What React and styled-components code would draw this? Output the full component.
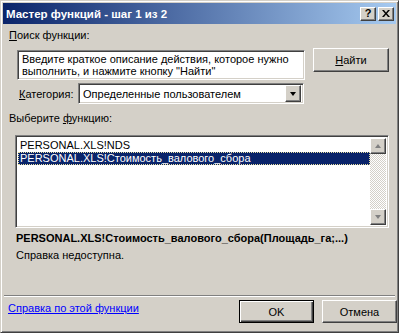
import React from "react";
import styled, { createGlobalStyle, css } from "styled-components";

const GlobalStyle = createGlobalStyle`
  html, body {
    margin: 0;
    padding: 0;
    background: #d4d0c8;
  }
  body {
    font-family: "Liberation Sans", Arial, sans-serif;
    font-size: 11px;
    color: #000;
  }
`;

const raised = css`
  border: 1px solid;
  border-color: #fff #404040 #404040 #fff;
  box-shadow: inset -1px -1px #808080, inset 1px 1px #d4d0c8;
  background: #d4d0c8;
`;

const sunken = css`
  border: 1px solid;
  border-color: #808080 #fff #fff #808080;
  box-shadow: inset 1px 1px #404040, inset -1px -1px #d4d0c8;
  background: #fff;
`;

const Window = styled.div`
  box-sizing: border-box;
  width: 399px;
  height: 333px;
  display: flex;
  flex-direction: column;
  padding: 1px;
  border: 1px solid;
  border-color: #d4d0c8 #404040 #404040 #d4d0c8;
  box-shadow: inset 1px 1px #fff, inset -1px -1px #808080;
  background: #d4d0c8;
  overflow: hidden;
`;

const TitleBar = styled.div`
  height: 21px;
  margin: 1px 1px 0;
  display: flex;
  align-items: center;
  padding: 0 2px 0 3px;
  background: linear-gradient(to right, #0a246a, #a6caf0);
`;

const Title = styled.span`
  flex: 1;
  color: #fff;
  font-weight: bold;
  font-size: 11.5px;
  white-space: nowrap;
`;

const CaptionButton = styled.div`
  ${raised};
  box-sizing: border-box;
  width: 16px;
  height: 14px;
  margin-left: ${p => p.$gap}px;
  display: flex;
  align-items: center;
  justify-content: center;
  font-weight: bold;
  font-size: 11px;
  line-height: 1;
`;

const Body = styled.div`
  display: flex;
  flex-direction: column;
  flex: 1;
`;

const Label = styled.div`
  height: 13px;
  line-height: 13px;
  margin: ${p => p.$top}px 0 0 ${p => p.$left}px;
  white-space: nowrap;
  font-weight: ${p => (p.$bold ? "bold" : "normal")};
`;

const Row = styled.div`
  display: flex;
  align-items: ${p => p.$align || "flex-start"};
  margin-top: ${p => p.$top}px;
`;

const SearchBox = styled.div`
  ${sunken};
  box-sizing: border-box;
  width: 288px;
  height: 30px;
  margin: 2px 0 0 15px;
  padding: 2px 4px;
  line-height: 12px;
`;

const Button = styled.div`
  ${raised};
  box-sizing: border-box;
  width: ${p => p.$w}px;
  height: ${p => p.$h}px;
  margin-left: ${p => p.$left}px;
  display: flex;
  align-items: center;
  justify-content: center;
  ${p =>
    p.$default &&
    css`
      border: 1px solid #000;
      box-shadow: inset 1px 1px #fff, inset -1px -1px #404040,
        inset -2px -2px #808080;
    `}
`;

const CatLabel = styled.div`
  width: 59px;
  margin-left: 17px;
`;

const Select = styled.div`
  ${sunken};
  box-sizing: border-box;
  width: 226px;
  height: 21px;
  display: flex;
  align-items: center;
  padding: 2px;
`;

const SelectText = styled.span`
  flex: 1;
  padding-left: 2px;
`;

const ArrowButton = styled.div`
  ${raised};
  box-sizing: border-box;
  width: ${p => p.$w || 16}px;
  height: ${p => p.$h || 17}px;
  display: flex;
  align-items: center;
  justify-content: center;
`;

const Arrow = styled.span`
  width: 0;
  height: 0;
  border-left: 3.5px solid transparent;
  border-right: 3.5px solid transparent;
  ${p =>
    p.$up
      ? css`border-bottom: 4px solid ${p.$color};`
      : css`border-top: 4px solid ${p.$color};`}
`;

const ListBox = styled.div`
  ${sunken};
  box-sizing: border-box;
  width: 374px;
  height: 93px;
  margin: 10px 0 0 13px;
  display: flex;
  padding: 2px;
`;

const Items = styled.div`
  flex: 1;
  padding-top: 1px;
`;

const Item = styled.div`
  height: 13px;
  line-height: 13px;
  padding-left: 2px;
  white-space: nowrap;
  overflow: hidden;
  ${p =>
    p.$selected &&
    css`
      background: #0a246a;
      color: #fff;
      outline: 1px dotted #e8e0a0;
      outline-offset: -1px;
    `}
`;

const ScrollBar = styled.div`
  width: 16px;
  display: flex;
  flex-direction: column;
  justify-content: space-between;
  background: repeating-conic-gradient(#fff 0 25%, #d4d0c8 0 50%) 0 0 / 2px
    2px;
`;

const Separator = styled.div`
  height: 0;
  margin: 33px 2px 0;
  border-top: 1px solid #808080;
  border-bottom: 1px solid #fff;
`;

const Link = styled.a`
  color: #0000ff;
  text-decoration: underline;
  margin: 2px 0 0 6px;
  line-height: 13px;
  flex: 1;
  white-space: nowrap;
  cursor: pointer;
`;

const U = styled.span`
  text-decoration: underline;
`;

export default function App() {
  return (
    <>
      <GlobalStyle />
      <Window>
        <TitleBar>
          <Title>Мастер функций - шаг 1 из 2</Title>
          <CaptionButton $gap={0}>?</CaptionButton>
          <CaptionButton $gap={2}>
            <svg width="8" height="7" viewBox="0 0 8 7">
              <path d="M0 0h2l2 2.5L6 0h2L5 3.5 8 7H6L4 4.5 2 7H0l3-3.5z" fill="#000" />
            </svg>
          </CaptionButton>
        </TitleBar>
        <Body>
          <Label $top={5} $left={7}>
            <U>П</U>оиск функции:
          </Label>
          <Row $top={6}>
            <SearchBox>
              Введите краткое описание действия, которое нужно выполнить, и
              нажмите кнопку "Найти"
            </SearchBox>
            <Button $w={76} $h={24} $left={8}>
              <span>
                <U>Н</U>айти
              </span>
            </Button>
          </Row>
          <Row $top={3} $align="center">
            <CatLabel>
              <U>К</U>атегория:
            </CatLabel>
            <Select>
              <SelectText>Определенные пользователем</SelectText>
              <ArrowButton>
                <Arrow $color="#000" />
              </ArrowButton>
            </Select>
          </Row>
          <Label $top={8} $left={7}>
            Выберите <U>ф</U>ункцию:
          </Label>
          <ListBox>
            <Items>
              <Item>PERSONAL.XLS!NDS</Item>
              <Item $selected>PERSONAL.XLS!Стоимость_валового_сбора</Item>
            </Items>
            <ScrollBar>
              <ArrowButton $h={16}>
                <Arrow $up $color="#808080" />
              </ArrowButton>
              <ArrowButton $h={16}>
                <Arrow $color="#808080" />
              </ArrowButton>
            </ScrollBar>
          </ListBox>
          <Label $top={4} $left={14} $bold>
            PERSONAL.XLS!Стоимость_валового_сбора(Площадь_га;...)
          </Label>
          <Label $top={4} $left={14}>
            Справка недоступна.
          </Label>
          <Separator />
          <Row $top={3}>
            <Link>Справка по этой функции</Link>
            <Button $w={75} $h={23} $left={0} $default>
              OK
            </Button>
            <Button $w={75} $h={23} $left={8}>
              Отмена
            </Button>
          </Row>
        </Body>
      </Window>
    </>
  );
}
